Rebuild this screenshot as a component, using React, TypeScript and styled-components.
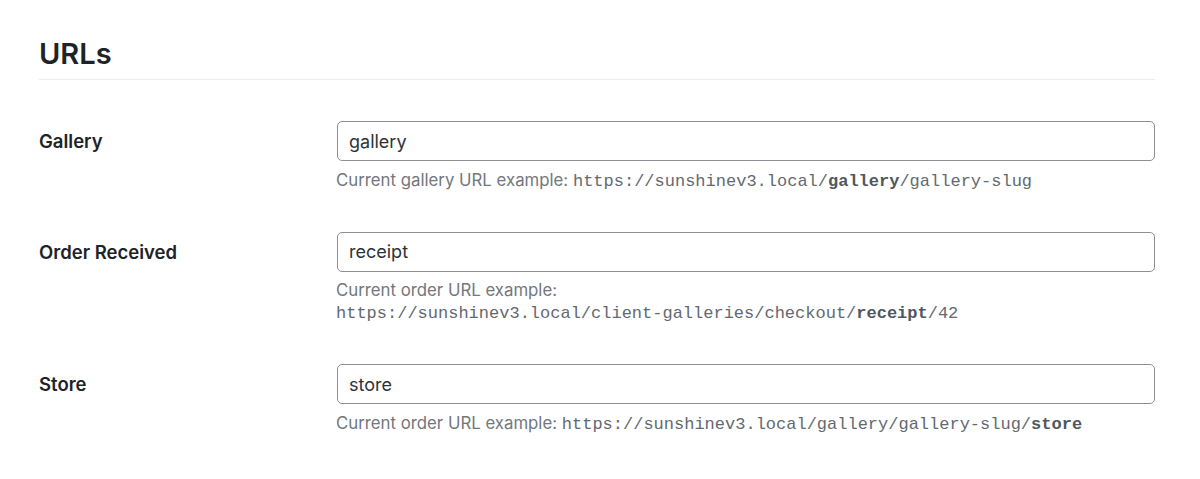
import React from "react";
import styled, { createGlobalStyle } from "styled-components";

const Global = createGlobalStyle`
  html, body { margin: 0; padding: 0; background: #ffffff; }
  body { font-family: Inter, "Liberation Sans", Arial, sans-serif; }
`;

const Page = styled.div`
  padding: 0 45px 0 39px;
  width: 1200px;
  box-sizing: border-box;
`;

const Heading = styled.h2`
  margin: 0;
  padding-top: 34px;
  font-size: 29px;
  line-height: 40px;
  font-weight: 600;
  color: #1d2327;
  padding-bottom: 5px;
  border-bottom: 1px solid #ececec;
`;

const Form = styled.div`
  display: flex;
  flex-direction: column;
  padding-top: 20.5px;
`;

const Row = styled.div`
  display: flex;
  align-items: flex-start;
  padding: 20.5px 0;
`;

const Label = styled.label`
  width: 298px;
  flex-shrink: 0;
  font-size: 18.5px;
  line-height: 40px;
  font-weight: 600;
  color: #1d2327;
`;

const Field = styled.div`
  flex: 1;
  display: flex;
  flex-direction: column;
`;

const Input = styled.input`
  box-sizing: border-box;
  height: 40px;
  width: 100%;
  border: 1px solid #8c8f94;
  border-radius: 5px;
  padding: 0 11px;
  font-family: Inter, "Liberation Sans", Arial, sans-serif;
  font-size: 18px;
  color: #2c3338;
  background: #fff;
  outline: none;
`;

const Description = styled.p`
  margin: 7.5px 0 0 -1px;
  font-size: 16.8px;
  line-height: 22px;
  color: #72777c;
`;

const Code = styled.code`
  font-family: "Liberation Mono", "Courier New", monospace;
  font-size: 17px;
  line-height: 1;
  color: #646970;
  b { color: #50575e; }
`;

const rows = [
  {
    label: "Gallery",
    value: "gallery",
    text: "Current gallery URL example:",
    pre: "https://sunshinev3.local/",
    bold: "gallery",
    post: "/gallery-slug",
    wrap: false,
  },
  {
    label: "Order Received",
    value: "receipt",
    text: "Current order URL example:",
    pre: "https://sunshinev3.local/client-galleries/checkout/",
    bold: "receipt",
    post: "/42",
    wrap: true,
  },
  {
    label: "Store",
    value: "store",
    text: "Current order URL example:",
    pre: "https://sunshinev3.local/gallery/gallery-slug/",
    bold: "store",
    post: "",
    wrap: false,
  },
];

export default function App() {
  return (
    <>
      <Global />
      <Page>
        <Heading>URLs</Heading>
        <Form>
          {rows.map((r) => (
            <Row key={r.label}>
              <Label>{r.label}</Label>
              <Field>
                <Input defaultValue={r.value} />
                <Description>
                  {r.text}
                  {r.wrap ? <br /> : " "}
                  <Code>
                    {r.pre}
                    <b>{r.bold}</b>
                    {r.post}
                  </Code>
                </Description>
              </Field>
            </Row>
          ))}
        </Form>
      </Page>
    </>
  );
}
